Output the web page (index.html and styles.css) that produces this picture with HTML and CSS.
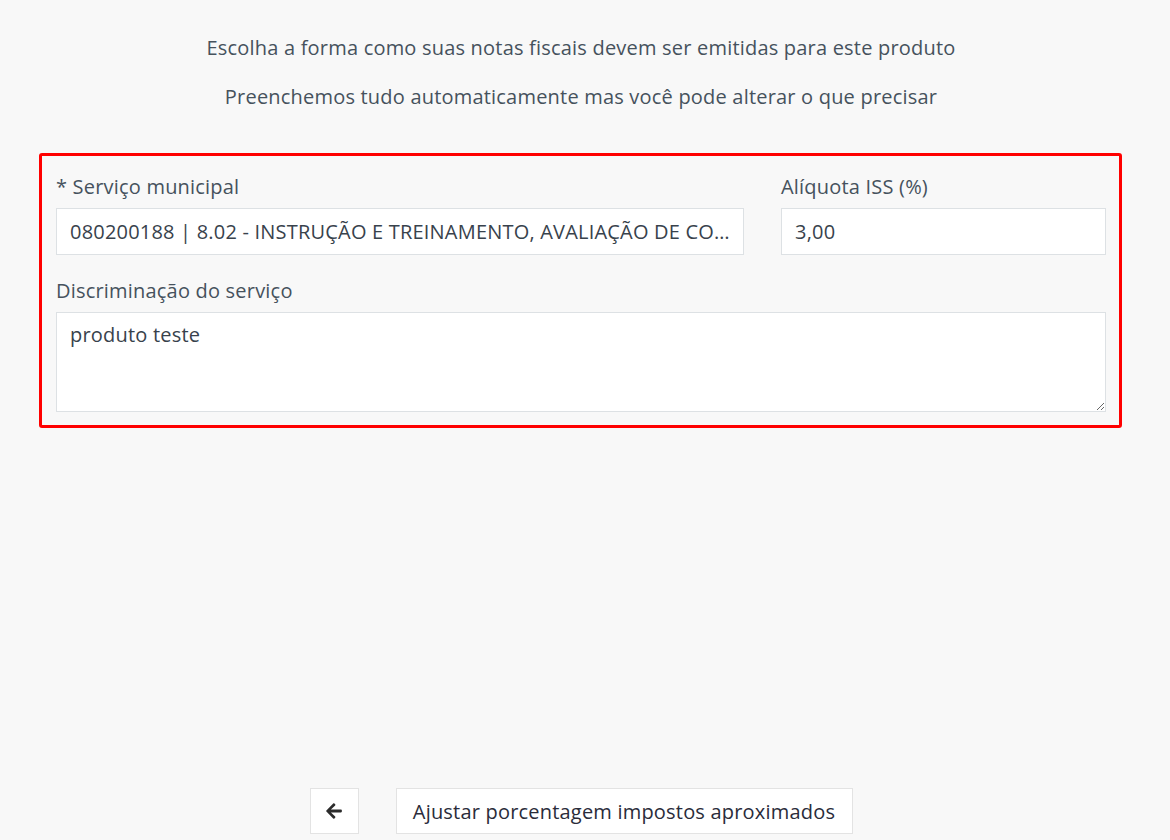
FILE: index.html
```html
<!DOCTYPE html>
<html>
<head>
    <title>Nota fiscal do produto</title>
    <link rel="stylesheet" href="styles.css">
</head>
<body>
    <div class="page">
        <!-- Intro -->
        <div class="intro">
            <p>Escolha a forma como suas notas fiscais devem ser emitidas para este produto</p>
            <p>Preenchemos tudo automaticamente mas você pode alterar o que precisar</p>
        </div>

        <!-- Tax form -->
        <div class="card">
            <div class="row">
                <div class="field">
                    <label for="servico">* Serviço municipal</label>
                    <input type="text" id="servico" readonly value="080200188 | 8.02 - INSTRUÇÃO E TREINAMENTO, AVALIAÇÃO DE CONHECIMENTOS DE QUALQUER NATUREZA">
                </div>
                <div class="field">
                    <label for="aliquota">Alíquota ISS (%)</label>
                    <input type="text" id="aliquota" value="3,00">
                </div>
            </div>
            <div class="field">
                <label for="discriminacao">Discriminação do serviço</label>
                <textarea id="discriminacao">produto teste</textarea>
            </div>
        </div>

        <!-- Footer buttons -->
        <div class="actions">
            <button class="btn btn-back" aria-label="Voltar">
                <svg width="18" height="18" viewBox="0 0 448 512"><path fill="#2b2b2b" d="M257.5 445.1l-22.2 22.2c-9.4 9.4-24.6 9.4-33.9 0L7 273c-9.4-9.4-9.4-24.6 0-33.9L201.4 44.7c9.4-9.4 24.6-9.4 33.9 0l22.2 22.2c9.5 9.5 9.3 25-.4 34.3L136.6 216H424c13.3 0 24 10.7 24 24v32c0 13.3-10.7 24-24 24H136.6l120.5 114.8c9.8 9.3 10 24.8.4 34.3z"/></svg>
            </button>
            <button class="btn btn-next">Ajustar porcentagem impostos aproximados</button>
        </div>
    </div>
</body>
</html>
```

FILE: styles.css
```css
body {
    margin: 0;
    background: #f8f8f8;
    font-family: 'Open Sans', 'Noto Sans', sans-serif;
    letter-spacing: 0.2px;
    color: #46525d;
}

.page {
    width: 1162px;
}

/* Intro */
.intro {
    text-align: center;
    padding-top: 36px;
    font-size: 20px;
    line-height: 24px;
}
.intro p {
    margin: 0 0 25px;
}

/* Card */
.card {
    margin: 44px 40px 0 39px;
    border: 3px solid #ff0000;
    border-radius: 3px;
    padding: 19px 13px 13px 14px;
}
.row {
    display: grid;
    grid-template-columns: 688px 325px;
    gap: 37px;
    margin-bottom: 24px;
}
.field label {
    display: block;
    font-size: 20px;
    line-height: 24px;
    margin-bottom: 9px;
}
.field input, .field textarea {
    display: block;
    width: 100%;
    box-sizing: border-box;
    border: 1px solid #dde1e4;
    border-radius: 0;
    background: #fff;
    font-family: inherit;
    font-size: 20px;
    letter-spacing: 0.2px;
    color: #38424c;
    padding: 0 13px;
    outline: none;
}
.field input {
    height: 47px;
    text-overflow: ellipsis;
}
.field textarea {
    height: 100px;
    padding-top: 8px;
    resize: vertical;
}

/* Actions */
.actions {
    display: flex;
    justify-content: center;
    gap: 37px;
    margin-top: 360px;
}
.btn {
    height: 46px;
    background: #fff;
    border: 1px solid #e3e3e3;
    border-radius: 0;
    font-family: inherit;
    font-size: 20px;
    letter-spacing: 0.2px;
    color: #2a2c3a;
    cursor: pointer;
}
.btn-back {
    width: 49px;
    display: flex;
    align-items: center;
    justify-content: center;
}
.btn-next {
    width: 457px;
}
```
